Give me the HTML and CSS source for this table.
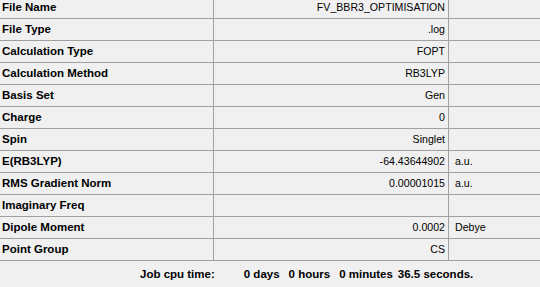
FILE: index.html
```html
<!DOCTYPE html>
<html>
<head>
<meta charset="utf-8">
<link rel="stylesheet" href="styles.css">
</head>
<body>
<div class="panel">
  <div class="grid">
    <div class="row"><div class="label">File Name</div><div class="value">FV_BBR3_OPTIMISATION</div><div class="unit"></div></div>
    <div class="row"><div class="label">File Type</div><div class="value">.log</div><div class="unit"></div></div>
    <div class="row"><div class="label">Calculation Type</div><div class="value">FOPT</div><div class="unit"></div></div>
    <div class="row"><div class="label">Calculation Method</div><div class="value">RB3LYP</div><div class="unit"></div></div>
    <div class="row"><div class="label">Basis Set</div><div class="value">Gen</div><div class="unit"></div></div>
    <div class="row"><div class="label">Charge</div><div class="value">0</div><div class="unit"></div></div>
    <div class="row"><div class="label">Spin</div><div class="value">Singlet</div><div class="unit"></div></div>
    <div class="row"><div class="label">E(RB3LYP)</div><div class="value">-64.43644902</div><div class="unit">a.u.</div></div>
    <div class="row"><div class="label">RMS Gradient Norm</div><div class="value">0.00001015</div><div class="unit">a.u.</div></div>
    <div class="row"><div class="label">Imaginary Freq</div><div class="value"></div><div class="unit"></div></div>
    <div class="row"><div class="label">Dipole Moment</div><div class="value">0.0002</div><div class="unit">Debye</div></div>
    <div class="row"><div class="label">Point Group</div><div class="value">CS</div><div class="unit"></div></div>
  </div>
  <div class="footer">
    <span class="f-label">Job cpu time:</span>
    <span class="f-days">0 days</span>
    <span class="f-hours">0 hours</span>
    <span class="f-min">0 minutes</span>
    <span class="f-sec">36.5 seconds.</span>
  </div>
</div>
</body>
</html>
```
FILE: styles.css
```css
html, body {
  margin: 0;
  padding: 0;
  background: #f0f0f0;
}
.panel {
  width: 540px;
  height: 287px;
  overflow: hidden;
  font-family: "Liberation Sans", Arial, sans-serif;
  font-size: 11px;
  color: #000;
}
.grid {
  margin-top: -3px;
}
.row {
  display: grid;
  grid-template-columns: 214px 235px 91px;
  height: 21px;
  border-bottom: 1px solid #a0a0a0;
}
.row > div {
  line-height: 21px;
  white-space: nowrap;
  overflow: hidden;
}
.label {
  font-weight: bold;
  font-size: 11.5px;
  padding-left: 2px;
  border-right: 1px solid #a0a0a0;
}
.value {
  text-align: right;
  padding-right: 3px;
  border-right: 1px solid #a0a0a0;
  font-size: 10.6px;
}
.unit {
  padding-left: 6px;
  font-size: 10.6px;
}
.footer {
  display: flex;
  font-weight: bold;
  font-size: 11.5px;
  padding-left: 140px;
  height: 26px;
  line-height: 26px;
  white-space: nowrap;
}
.f-days { margin-left: 29px; }
.f-hours { margin-left: 9px; }
.f-min { margin-left: 9px; }
.f-sec { margin-left: 5px; }
```
